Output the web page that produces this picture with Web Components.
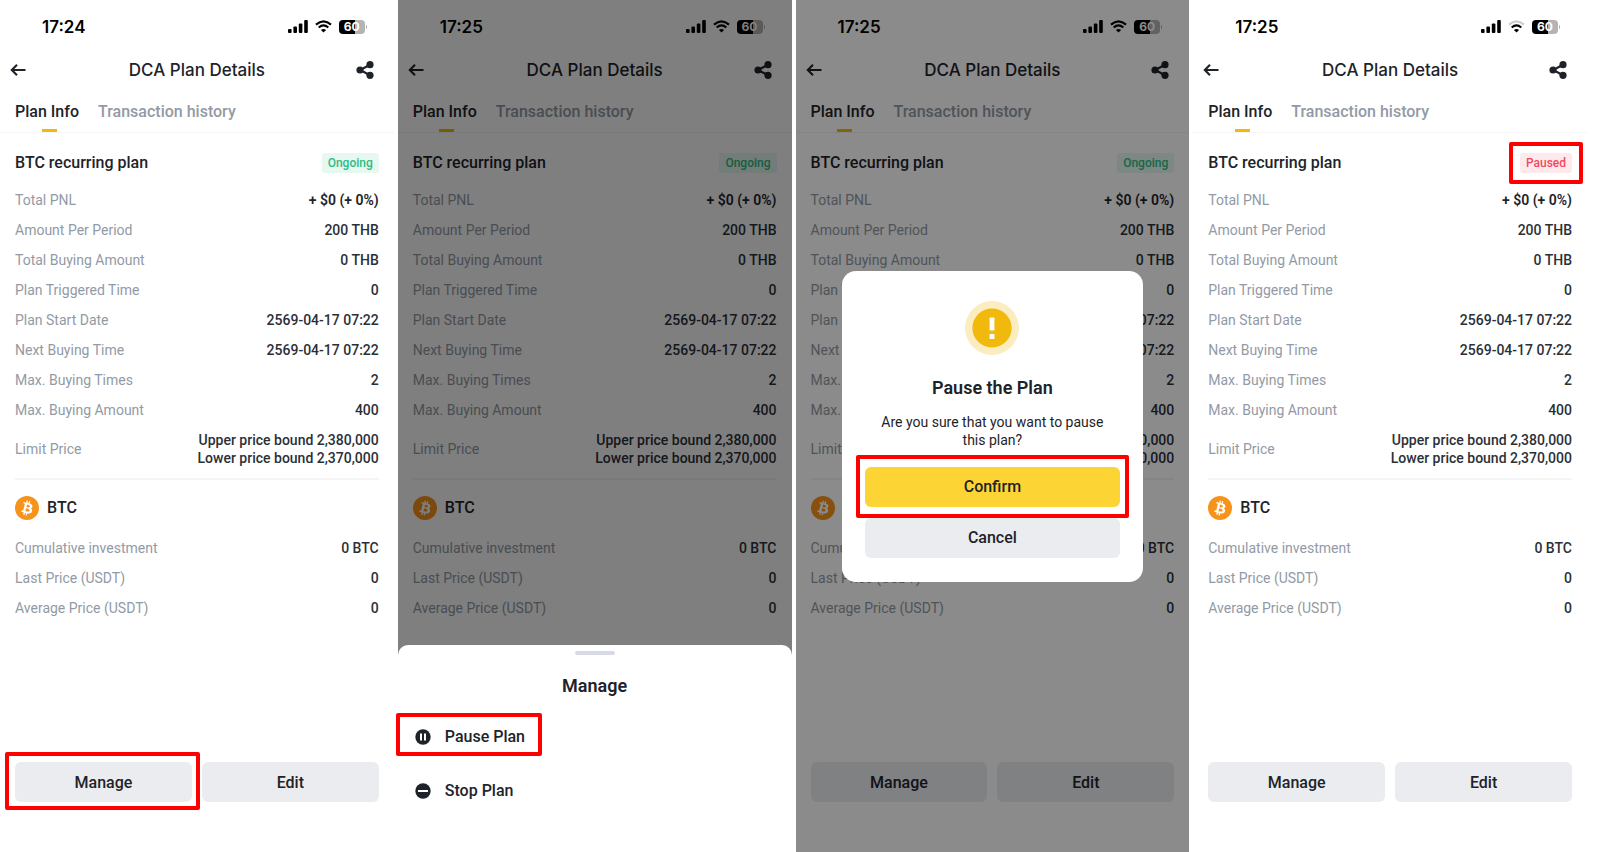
<!DOCTYPE html>
<html lang="en">
<head>
<meta charset="utf-8">
<meta name="viewport" content="width=device-width, initial-scale=1">
<title>DCA Plan Details</title>
<style>
  body { margin: 0; background: #fff; font-family: Roboto, "Liberation Sans", sans-serif; color: #1e2329; }
</style>
</head>
<body>
<plan-board>
  <plan-screen time="17:24" status="Ongoing" mark-manage></plan-screen>
  <plan-screen time="17:25" status="Ongoing"><manage-sheet slot="overlay"></manage-sheet></plan-screen>
  <plan-screen time="17:25" status="Ongoing"><pause-dialog slot="overlay"></pause-dialog></plan-screen>
  <plan-screen time="17:25" status="Paused" weak-wifi mark-status></plan-screen>
</plan-board>

<script>
const define = (name, html, setup) => {
  const tpl = document.createElement('template');
  tpl.innerHTML = html;
  customElements.define(name, class extends HTMLElement {
    connectedCallback() {
      if (this.shadowRoot) return;
      this.attachShadow({ mode: 'open' }).append(tpl.content.cloneNode(true));
      if (setup) setup(this, this.shadowRoot);
    }
  });
};

define('plan-board', `
<style>
  :host { display: grid; grid-template-columns: repeat(4, minmax(0, 1fr)); gap: 4px; padding-right: 13px; min-height: 100vh; box-sizing: border-box; }
</style><slot></slot>`);

/* Red annotation frame drawn around its slotted content */
define('red-mark', `
<style>
  :host { display: grid; position: relative; min-width: 0; }
  :host([on])::after { content: ""; position: absolute; inset: var(--mark-inset, -11px); border: 4px solid #fe0000; border-radius: 2px; pointer-events: none; z-index: 2; }
</style><slot></slot>`);

define('status-bar', `
<style>
  :host { display: flex; align-items: center; justify-content: space-between; height: 53px; padding: 0 27px 0 42px; color: #000; }
  time { font: 600 17px/20px Inter, sans-serif; }
  .icons { display: flex; align-items: center; gap: 7px; }
  svg { display: block; }
  .battery { display: flex; align-items: center; gap: 1px; }
  .level { width: 26px; height: 14px; border-radius: 4px; background: linear-gradient(90deg, #000 62%, #b4b4b4 62%); color: #fff; font: 700 12px/14px Inter, sans-serif; text-align: center; }
  .cap { width: 1px; height: 4px; background: #b4b4b4; border-radius: 0 1px 1px 0; }
  :host([weak-wifi]) .outer { stroke: #ccc; }
</style>
<time></time>
<div class="icons">
  <svg width="20" height="13" viewBox="0 0 20 13" role="img" aria-label="Signal"><rect y="9" width="3.6" height="4" rx="1"/><rect x="5.4" y="6.5" width="3.6" height="6.500" rx="1"/><rect x="10.800" y="3.500" width="3.600" height="9.500" rx="1"/><rect x="16.200" y="0" width="3.600" height="13" rx="1"/></svg>
  <svg width="17" height="13" viewBox="0 0 17 13" role="img" aria-label="Wi-Fi" fill="none" stroke="#000" stroke-width="2.200"><path class="outer" d="M1 4.600Q8.500-1.800 16 4.600"/><path d="M3.700 7.500Q8.500 3.400 13.300 7.500"/><path fill="#000" stroke="none" d="M8.500 12.600 5.900 9.900Q8.500 7.900 11.100 9.900Z"/></svg>
  <div class="battery"><div class="level">60</div><div class="cap"></div></div>
</div>`, (el, root) => {
  root.querySelector('time').textContent = el.getAttribute('time');
});

define('data-row', `
<style>
  :host { display: flex; justify-content: space-between; align-items: center; gap: 12px; font-size: 14px; line-height: 18px; }
  .label { color: #929aa5; }
  .value { color: #2b3038; text-align: right; white-space: pre-line; font-weight: 500; }
  :host([strong]) .value { color: #1e2329; font-weight: 600; }
</style>
<span class="label"></span><span class="value"></span>`, (el, root) => {
  root.querySelector('.label').textContent = el.getAttribute('label');
  root.querySelector('.value').textContent = el.getAttribute('value');
});

define('action-button', `
<style>
  :host { display: grid; min-width: 0; }
  button { height: 40px; border: 0; padding: 1px 6px 0; border-radius: 6px; background: #eaecef; color: #1e2329; font: 500 16px/20px Roboto, sans-serif; cursor: pointer; }
  :host([primary]) button { background: #fcd535; }
</style><button type="button"><slot></slot></button>`);

define('plan-screen', `
<style>
  :host { display: flex; flex-direction: column; position: relative; background: #fff; min-width: 0; }
  button { border: 0; padding: 0; background: none; font: inherit; color: inherit; cursor: pointer; }
  svg { display: block; }
  header { display: grid; grid-template-columns: 28px 1fr 18px; align-items: center; height: 34px; padding: 0 20px 0 10px; }
  h1 { margin: 0; font: 500 17px/24px Inter, sans-serif; text-align: center; }
  nav { display: flex; gap: 15px; padding: 15px 15px 0; border-bottom: 1px solid #f5f5f5; }
  nav button { height: 30px; min-width: 68px; padding-bottom: 11px; font-weight: 500; font-size: 16px; line-height: 19px; color: #929aa5; white-space: nowrap; text-align: left; }
  nav .on { color: #1e2329; background: linear-gradient(#f0b90b, #f0b90b) center bottom / 15px 3px no-repeat; }
  main { padding: 20px 15px 0; }
  .top { display: flex; justify-content: space-between; align-items: center; height: 20px; margin-bottom: 18px; }
  h2 { margin: 0; font-size: 16px; line-height: 20px; font-weight: 500; }
  .badge { padding: 0 6px; border-radius: 3px; background: #e6f8f0; color: #2ebd85; font-size: 12px; line-height: 20px; font-weight: 500; }
  .badge.paused { background: #feeaed; color: #f6465d; }
  .rows { display: grid; gap: 12px; }
  hr { margin: 11px 0 16px; border: 0; height: 2px; background: #f5f5f5; }
  .coin { display: flex; align-items: center; gap: 8px; margin-bottom: 19px; }
  footer { display: grid; grid-template-columns: 1fr 1fr; gap: 10px; padding: 24px 15px 50px; margin-top: auto; }
  footer red-mark { --mark-inset: -10px -8px -8px -10px; }
</style>
<status-bar></status-bar>
<header>
  <button type="button" aria-label="Back"><svg width="16" height="12" viewBox="0 0 16 12" fill="none" stroke="#1e2329" stroke-width="2.100"><path d="M15.500 6H2M7 .8 1.800 6 7 11.200"/></svg></button>
  <h1>DCA Plan Details</h1>
  <button type="button" aria-label="Share"><svg width="18" height="18" viewBox="0 0 18 18" fill="#1e2329"><path d="M14 3.700 4.200 9 14 14.300" fill="none" stroke="#1e2329" stroke-width="2.200"/><circle cx="4" cy="9" r="3.600"/><circle cx="14" cy="3.700" r="3.600"/><circle cx="14" cy="14.300" r="3.600"/></svg></button>
</header>
<nav><button type="button" class="on">Plan Info</button><button type="button">Transaction history</button></nav>
<main>
  <div class="top"><h2>BTC recurring plan</h2><red-mark class="status"><span class="badge"></span></red-mark></div>
  <div class="rows">
    <data-row strong label="Total PNL" value="+ $0 (+ 0%)"></data-row>
    <data-row label="Amount Per Period" value="200 THB"></data-row>
    <data-row label="Total Buying Amount" value="0 THB"></data-row>
    <data-row label="Plan Triggered Time" value="0"></data-row>
    <data-row label="Plan Start Date" value="2569-04-17 07:22"></data-row>
    <data-row label="Next Buying Time" value="2569-04-17 07:22"></data-row>
    <data-row label="Max. Buying Times" value="2"></data-row>
    <data-row label="Max. Buying Amount" value="400"></data-row>
    <data-row label="Limit Price" value="Upper price bound 2,380,000&#10;Lower price bound 2,370,000"></data-row>
  </div>
  <hr>
  <div class="coin">
    <svg width="24" height="24" viewBox="0 0 32 32" aria-hidden="true"><circle cx="16" cy="16" r="16" fill="#f7931a"/><path fill="#fff" d="M23.189 14.020c.314-2.096-1.283-3.223-3.465-3.975l.708-2.840-1.728-.43-.69 2.765c-.454-.114-.92-.22-1.385-.326l.695-2.783L15.596 6l-.708 2.839c-.376-.086-.746-.17-1.104-.26l.002-.009-2.384-.595-.46 1.846s1.283.294 1.256.312c.7.175.826.638.805 1.006l-.806 3.235c.048.012.11.03.18.057l-.183-.045-1.130 4.532c-.086.212-.303.531-.793.41.018.025-1.256-.313-1.256-.313l-.858 1.978 2.250.561c.418.105.828.215 1.231.318l-.715 2.872 1.727.43.708-2.840c.472.127.93.245 1.378.357l-.706 2.828 1.728.43.715-2.866c2.948.558 5.164.333 6.097-2.333.752-2.146-.037-3.385-1.588-4.192 1.130-.26 1.980-1.003 2.207-2.538zm-3.950 5.538c-.533 2.147-4.148.986-5.320.695l.95-3.805c1.172.293 4.929.872 4.370 3.110zm.535-5.569c-.487 1.953-3.495.96-4.470.717l.86-3.450c.975.243 4.118.696 3.610 2.733z"/></svg>
    <h2>BTC</h2>
  </div>
  <div class="rows">
    <data-row label="Cumulative investment" value="0 BTC"></data-row>
    <data-row label="Last Price (USDT)" value="0"></data-row>
    <data-row label="Average Price (USDT)" value="0"></data-row>
  </div>
</main>
<footer>
  <red-mark class="manage"><action-button>Manage</action-button></red-mark>
  <action-button>Edit</action-button>
</footer>
<slot name="overlay"></slot>`, (el, root) => {
  const bar = root.querySelector('status-bar');
  bar.shadowRoot
    ? bar.shadowRoot.querySelector('time').textContent = el.getAttribute('time')
    : bar.setAttribute('time', el.getAttribute('time'));
  bar.toggleAttribute('weak-wifi', el.hasAttribute('weak-wifi'));
  const badge = root.querySelector('.badge');
  badge.textContent = el.getAttribute('status');
  badge.classList.toggle('paused', el.getAttribute('status') === 'Paused');
  root.querySelector('.status').toggleAttribute('on', el.hasAttribute('mark-status'));
  root.querySelector('.manage').toggleAttribute('on', el.hasAttribute('mark-manage'));
});

define('manage-sheet', `
<style>
  :host { position: absolute; inset: 0; display: flex; flex-direction: column; justify-content: flex-end; background: rgba(0, 0, 0, .5); z-index: 3; }
  section { background: #fff; border-radius: 10px 10px 0 0; padding: 6px 0 34px; }
  .handle { width: 40px; height: 4px; margin: 0 auto 19px; border-radius: 2px; background: #d8dae3; }
  h2 { margin: 0 0 12px; font-size: 18px; line-height: 24px; font-weight: 600; text-align: center; }
  ul { list-style: none; margin: 0; padding: 0; display: grid; justify-items: start; }
  li { height: 54px; display: grid; align-items: center; }
  button { display: flex; align-items: center; gap: 14px; border: 0; padding: 0 0 0 17px; background: none; color: #1e2329; font: 500 16px/20px Roboto, sans-serif; cursor: pointer; }
  red-mark { --mark-inset: -14px -17px -9px -2px; }
</style>
<section role="dialog" aria-label="Manage">
  <div class="handle"></div>
  <h2>Manage</h2>
  <ul>
    <li><red-mark on><button type="button"><svg width="16" height="16" viewBox="0 0 16 16" aria-hidden="true"><circle cx="8" cy="8" r="7.700" fill="#1e2329"/><path d="M5 4.500h2v7H5zM9 4.500h2v7H9z" fill="#fff"/></svg>Pause Plan</button></red-mark></li>
    <li><button type="button"><svg width="16" height="16" viewBox="0 0 16 16" aria-hidden="true"><circle cx="8" cy="8" r="7.700" fill="#1e2329"/><path d="M3 7h10v2H3z" fill="#fff"/></svg>Stop Plan</button></li>
  </ul>
</section>`);

define('pause-dialog', `
<style>
  :host { position: absolute; inset: 0; display: grid; align-content: center; padding: 0 46px; background: rgba(0, 0, 0, .455); z-index: 3; }
  section { background: #fff; border-radius: 14px; padding: 30px 23px 24px; display: grid; text-align: center; }
  svg { justify-self: center; }
  h2 { margin: 21px 0 13px; font-size: 18px; line-height: 24px; font-weight: 600; }
  p { margin: 0 12px 18px; font-size: 14px; line-height: 18px; }
  .actions { display: grid; gap: 11px; }
  red-mark { --mark-inset: -12px -9px -11px -9px; }
</style>
<section role="alertdialog" aria-label="Pause the Plan">
  <svg width="54" height="54" viewBox="0 0 54 54" aria-hidden="true"><circle cx="27" cy="27" r="27" fill="#fbedc0"/><circle cx="27" cy="27" r="19.600" fill="#f0b90b"/><path fill="#fff" d="M24.600 16.500h4.800v13h-4.800zM24.600 33h4.800v5h-4.800z"/></svg>
  <h2>Pause the Plan</h2>
  <p>Are you sure that you want to pause this plan?</p>
  <div class="actions">
    <red-mark on><action-button primary>Confirm</action-button></red-mark>
    <action-button>Cancel</action-button>
  </div>
</section>`);
</script>
</body>
</html>
